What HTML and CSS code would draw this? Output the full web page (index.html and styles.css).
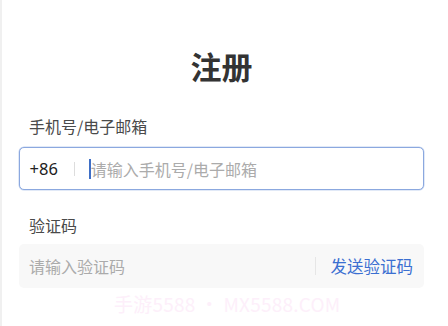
FILE: index.html
```html
<!DOCTYPE html>
<html lang="zh">
<head>
<meta charset="utf-8">
<link rel="stylesheet" href="styles.css">
</head>
<body>
<div class="page">
  <h1 class="title">注册</h1>
  <div class="field">
    <div class="label">手机号/电子邮箱</div>
    <div class="input focused">
      <span class="prefix">+86</span>
      <span class="sep"></span>
      <span class="caret"></span>
      <span class="ph">请输入手机号/电子邮箱</span>
    </div>
  </div>
  <div class="field second">
    <div class="label">验证码</div>
    <div class="input filled">
      <span class="ph grow">请输入验证码</span>
      <span class="sep right"></span>
      <span class="send">发送验证码</span>
    </div>
  </div>
  <div class="watermark">手游5588 • MX5588.COM</div>
</div>
</body>
</html>
```
FILE: styles.css
```css
html, body {
  margin: 0;
  padding: 0;
  background: #fff;
}
body {
  font-family: "Noto Sans CJK SC", "Noto Sans", sans-serif;
  width: 448px;
  height: 326px;
  overflow: hidden;
}
.page {
  position: relative;
  height: 326px;
  box-sizing: border-box;
  border-left: 2px solid #f0f0f0;
  padding: 0 24px 0 17px;
}
.title {
  margin: 0;
  padding-top: 45px;
  height: 42px;
  line-height: 42px;
  text-align: center;
  font-size: 31px;
  font-weight: 700;
  color: #333;
}
.field {
  display: flex;
  flex-direction: column;
}
.label {
  margin-top: 27px;
  padding-left: 10px;
  font-size: 16px;
  line-height: 24px;
  color: #4a4a4a;
}
.second .label {
  margin-top: 23px;
}
.input {
  display: flex;
  align-items: center;
  box-sizing: border-box;
  margin-top: 9px;
  height: 43px;
  border-radius: 5px;
  padding: 0 10px 0 9px;
  font-size: 16px;
}
.second .input {
  margin-top: 7px;
  height: 44px;
}
.focused {
  border: 1px solid #8ba8df;
  box-shadow: 0 0 0 0.5px #c3d3ef;
  background: #fff;
  padding-left: 9.5px;
}
.filled {
  background: #f8f8f8;
  padding-left: 10px;
  padding-right: 11px;
}
.prefix {
  color: #222;
  font-family: "Noto Sans", sans-serif;
  font-size: 16.5px;
}
.sep {
  display: inline-block;
  width: 1px;
  height: 14px;
  background: #ddd;
  margin: 0 14px 0 16px;
}
.sep.right {
  margin: 0 15px 0 0;
  height: 18px;
  background: #e6e6e6;
}
.caret {
  display: inline-block;
  width: 2px;
  height: 20px;
  background: #3f6fc6;
}
.ph {
  color: #ababab;
}
.grow {
  flex: 1;
}
.send {
  color: #3b6fd1;
  font-size: 16.5px;
}
.watermark {
  position: absolute;
  left: 112px;
  top: 292px;
  font-size: 19px;
  line-height: 24px;
  letter-spacing: 0.2px;
  color: #fdeffa;
  white-space: nowrap;
}
```
